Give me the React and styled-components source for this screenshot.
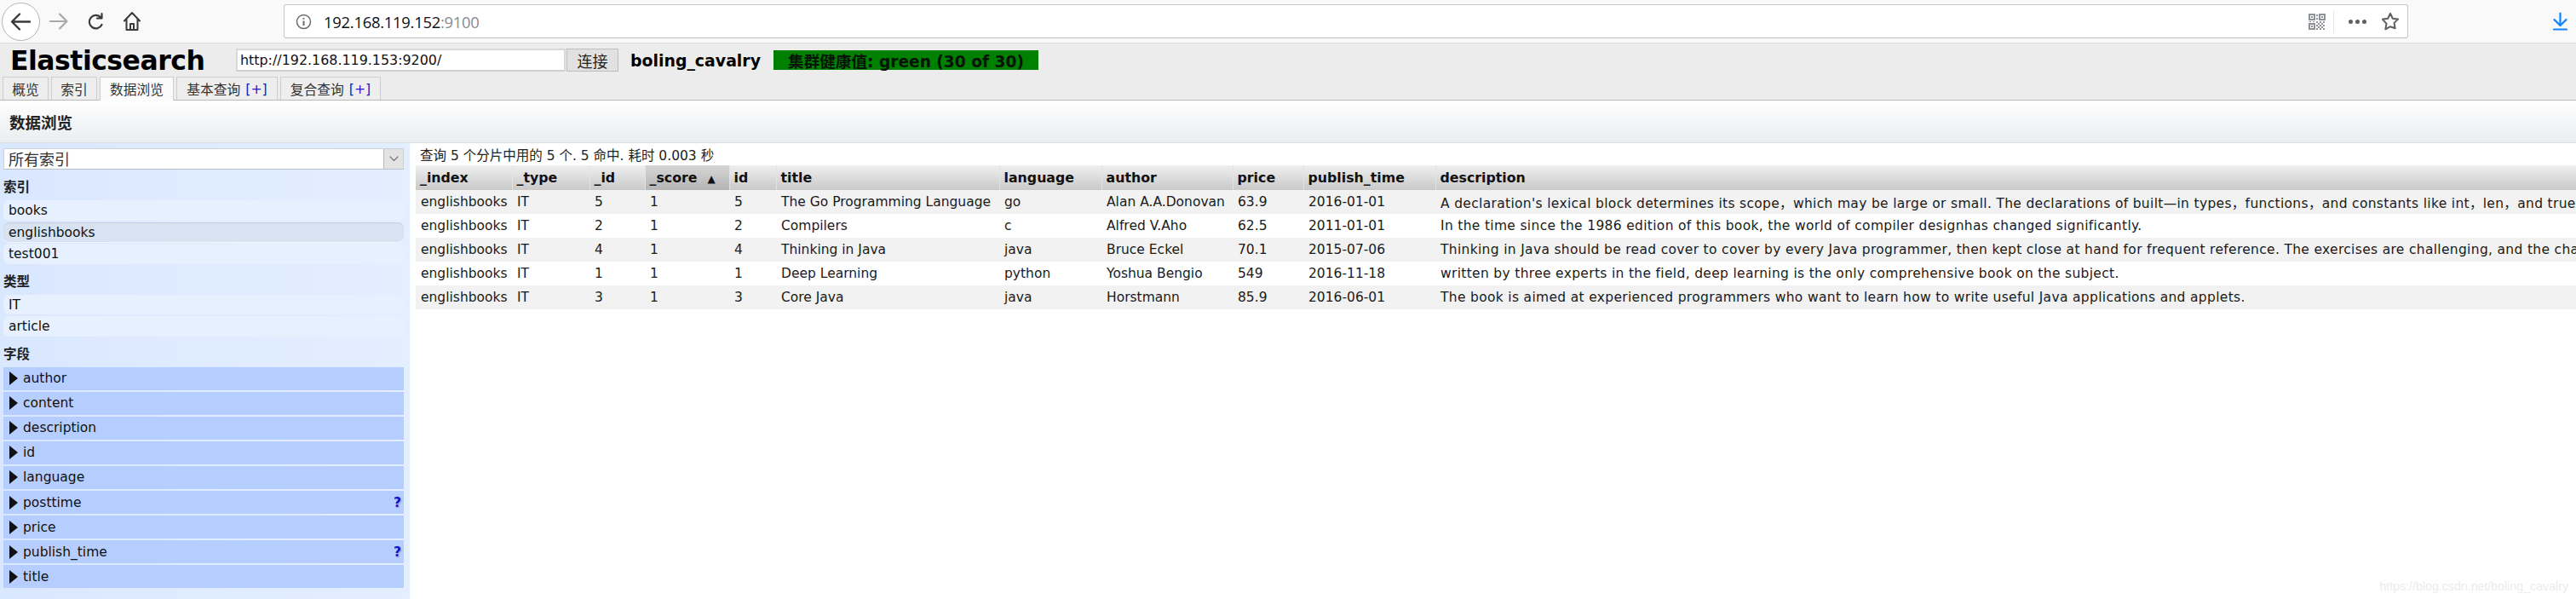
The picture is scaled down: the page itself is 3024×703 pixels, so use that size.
import React from 'react';
import styled, { createGlobalStyle } from 'styled-components';

const sans = '"DejaVu Sans", "Noto Sans CJK SC", sans-serif';

const GlobalStyle = createGlobalStyle`
  html, body {
    margin: 0;
    height: 100%;
    overflow: hidden;
    background: #fff;
  }
  body {
    font-family: ${sans};
    font-size: 15.5px;
    color: #111;
  }
`;

const Page = styled.div`
  position: relative;
  display: flex;
  flex-direction: column;
  height: 100vh;
  overflow: hidden;
`;

/* browser chrome */
const Toolbar = styled.div`
  display: flex;
  align-items: center;
  flex: none;
  height: 51px;
  box-sizing: border-box;
  padding-left: 2px;
  background: #f9f9fa;
  border-bottom: 1px solid #dcdcdc;
`;

const BackButton = styled.div`
  display: flex;
  align-items: center;
  justify-content: center;
  flex: none;
  width: 45px;
  height: 45px;
  box-sizing: border-box;
  border: 1px solid #b5b5b7;
  border-radius: 50%;
  background: #fff;
`;

const NavIcon = styled.svg`
  flex: none;
  margin-left: ${({ $left }) => $left}px;
`;

const UrlBar = styled.div`
  display: flex;
  align-items: center;
  flex: none;
  width: 2494px;
  height: 40px;
  margin-left: 168px;
  box-sizing: border-box;
  padding: 0 9px 0 13px;
  background: #fff;
  border: 1px solid #c8c8c9;
  border-bottom-color: #bdbdbe;
  border-radius: 3px;
`;

const Host = styled.span`
  margin-left: 14px;
  font-family: "Open Sans", "Liberation Sans", sans-serif;
  font-size: 18.4px;
  letter-spacing: -0.25px;
  color: #111;
`;

const Port = styled.span`
  color: #8a8a8f;
`;

const UrlActions = styled.div`
  display: flex;
  align-items: center;
  margin-left: auto;
`;

const UrlDivider = styled.div`
  width: 1px;
  height: 27px;
  margin: 0 17px 0 9px;
  background: #e6e6e7;
`;

/* head plugin header */
const Header = styled.div`
  flex: none;
  height: 67px;
  box-sizing: border-box;
  background: #ececec;
  border-bottom: 1px solid #b9b9b9;
`;

const HeaderRow = styled.div`
  display: flex;
  align-items: center;
  height: 39px;
`;

const Brand = styled.h1`
  width: 265px;
  margin: 0 0 0 12px;
  font-size: 31.5px;
  font-weight: 700;
  letter-spacing: -0.5px;
  white-space: nowrap;
  color: #000;
`;

const HostInput = styled.input`
  width: 387px;
  height: 27px;
  box-sizing: border-box;
  padding: 0 3px;
  border: 2px solid #d8d8d8;
  border-bottom-color: #cfcfcf;
  background: #fff;
  font-family: ${sans};
  font-size: 15.9px;
  color: #111;
  outline: none;
`;

const ConnectButton = styled.button`
  width: 61px;
  height: 27px;
  margin-left: 1px;
  padding: 0;
  border: 1px solid #bdbdbd;
  background: #e1e1e1;
  font-family: ${sans};
  font-size: 18px;
  color: #222;
`;

const ClusterName = styled.span`
  width: 154px;
  margin-left: 14px;
  font-size: 18.9px;
  font-weight: 700;
  white-space: nowrap;
  color: #000;
`;

const Health = styled.span`
  display: flex;
  align-items: center;
  justify-content: center;
  width: 311px;
  height: 23px;
  margin-left: 14px;
  background: #008000;
  font-size: 18.6px;
  font-weight: 700;
  white-space: nowrap;
  color: #061306;
`;

const Tabs = styled.div`
  display: flex;
  align-items: flex-end;
  gap: 3px;
  height: 27px;
  padding-left: 3px;
`;

const Tab = styled.div`
  display: flex;
  align-items: center;
  justify-content: center;
  width: ${({ $width }) => $width}px;
  height: ${({ $active }) => ($active ? 28 : 27)}px;
  box-sizing: border-box;
  margin-bottom: ${({ $active }) => ($active ? -1 : 0)}px;
  background: ${({ $active }) => ($active ? '#fbfbfb' : '#eee')};
  border: 1px solid #cdcdcd;
  border-bottom: none;
  font-size: 15.75px;
  white-space: nowrap;
  color: #333;
`;

const Plus = styled.span`
  margin-left: 6px;
  color: #1a1acb;
`;

const TitleBar = styled.div`
  display: flex;
  align-items: center;
  flex: none;
  height: 50px;
  box-sizing: border-box;
  padding-left: 11px;
  background: linear-gradient(#fefefe, #eaedf0);
  border-bottom: 1px solid #dce0e5;
  font-size: 18.5px;
  font-weight: 700;
  color: #222;
`;

const Body = styled.div`
  display: flex;
  flex: 1;
  min-height: 0;
`;

/* left filter column */
const Sidebar = styled.aside`
  flex: none;
  width: 481px;
  box-sizing: border-box;
  padding: 6px 7px 0 4px;
  background: linear-gradient(90deg, #d9e7ff 0%, #dfebff 45%, #e3eeff 100%);
`;

const SelectBox = styled.div`
  display: flex;
  height: 25px;
  box-sizing: border-box;
  background: #fff;
  border: 1px solid #ccd2dc;
  border-bottom-color: #b9c0cc;
`;

const SelectValue = styled.span`
  flex: 1;
  padding: 1px 0 0 5px;
  font-size: 18px;
  line-height: 23px;
  color: #333;
`;

const SelectArrow = styled.span`
  display: flex;
  align-items: center;
  justify-content: center;
  width: 22px;
  background: #e3e3e3;
  border-left: 1px solid #b8b8b8;
`;

const GroupTitle = styled.h4`
  display: flex;
  align-items: center;
  height: 36px;
  margin: 0;
  padding-top: 2px;
  box-sizing: border-box;
  font-size: 15.5px;
  font-weight: 700;
  color: #222;
`;

const FilterList = styled.div`
  display: flex;
  flex-direction: column;
  gap: 2px;
`;

const FilterItem = styled.div`
  height: 23.5px;
  box-sizing: border-box;
  padding-left: 6px;
  background: ${({ $active }) => ($active ? '#d8e2f0' : '#e7f0ff')};
  border-radius: 7px;
  box-shadow: ${({ $active }) => ($active ? 'inset 0 1px 1px #c6d0df, 0 1px 0 #f2f6ff' : 'none')};
  line-height: 24px;
  color: #111;
`;

const FieldList = styled.div`
  display: flex;
  flex-direction: column;
  gap: 2px;
`;

const Field = styled.div`
  display: flex;
  align-items: center;
  height: 27.1px;
  box-sizing: border-box;
  padding: 0 3px 0 7px;
  background: #b6ceff;
  color: #111;
`;

const Caret = styled.svg`
  flex: none;
  margin-right: 6px;
`;

const Hint = styled.span`
  margin-left: auto;
  font-weight: 700;
  color: #1111cc;
  text-shadow: 1px 1px 2px #8a9ad8;
`;

/* results */
const Results = styled.main`
  flex: 1;
  min-width: 0;
  padding-left: 7px;
  overflow: hidden;
`;

const Summary = styled.div`
  height: 26px;
  padding-left: 5px;
  line-height: 30px;
  white-space: nowrap;
  color: #222;
`;

const Table = styled.table`
  width: 2536px;
  table-layout: fixed;
  border-collapse: collapse;
`;

const HeadCell = styled.th`
  height: 29px;
  box-sizing: border-box;
  padding: 0 5px;
  text-align: left;
  font-size: 15.8px;
  font-weight: 700;
  white-space: nowrap;
  color: #111;
  border-left: 1px solid #e4e4e4;
  background: ${({ $sorted }) =>
    $sorted ? 'linear-gradient(#d6d6d6, #b4b4b4)' : 'linear-gradient(#efefef, #c9c9c9)'};
  &:first-child {
    border-left: none;
  }
`;

const SortArrow = styled.span`
  margin-left: 12px;
  font-size: 12px;
`;

const Row = styled.tr`
  background: ${({ $even }) => ($even ? '#f2f2f2' : '#fff')};
`;

const Cell = styled.td`
  height: 28px;
  box-sizing: border-box;
  padding: 0 5px 0 6px;
  letter-spacing: ${({ $long }) => ($long ? '0.32px' : 'normal')};
  white-space: nowrap;
  overflow: hidden;
  color: #1a1a1a;
`;

const Watermark = styled.div`
  position: absolute;
  right: 9px;
  bottom: 7px;
  font-family: "Liberation Sans", sans-serif;
  font-size: 14.2px;
  color: #ececec;
`;

const columns = [
  ['_index', 113],
  ['_type', 91],
  ['_id', 65],
  ['_score', 99],
  ['id', 55],
  ['title', 262],
  ['language', 120],
  ['author', 154],
  ['price', 83],
  ['publish_time', 155],
  ['description', 1351],
];

const rows = [
  ['englishbooks', 'IT', '5', '1', '5', 'The Go Programming Language', 'go', 'Alan A.A.Donovan', '63.9', '2016-01-01',
    "A declaration's lexical block determines its scope，which may be large or small. The declarations of built—in types，functions，and constants like int，len，and true are in the universe block and can be referred to throughout the entire program."],
  ['englishbooks', 'IT', '2', '1', '2', 'Compilers', 'c', 'Alfred V.Aho', '62.5', '2011-01-01',
    'In the time since the 1986 edition of this book, the world of compiler designhas changed significantly.'],
  ['englishbooks', 'IT', '4', '1', '4', 'Thinking in Java', 'java', 'Bruce Eckel', '70.1', '2015-07-06',
    'Thinking in Java should be read cover to cover by every Java programmer, then kept close at hand for frequent reference. The exercises are challenging, and the chapter on Collections is superb!'],
  ['englishbooks', 'IT', '1', '1', '1', 'Deep Learning', 'python', 'Yoshua Bengio', '549', '2016-11-18',
    'written by three experts in the field, deep learning is the only comprehensive book on the subject.'],
  ['englishbooks', 'IT', '3', '1', '3', 'Core Java', 'java', 'Horstmann', '85.9', '2016-06-01',
    'The book is aimed at experienced programmers who want to learn how to write useful Java applications and applets.'],
];

const fields = [
  ['author'],
  ['content'],
  ['description'],
  ['id'],
  ['language'],
  ['posttime', true],
  ['price'],
  ['publish_time', true],
  ['title'],
];

const stroke = { fill: 'none', strokeLinecap: 'round', strokeLinejoin: 'round' };

const QrIcon = () => (
  <svg width="20" height="19" viewBox="0 0 20 19" fill="#8f9399">
    <path d="M0 0h8v8H0zM2 2v4h4V2zM12 0h8v8h-8zM14 2v4h4V2zM0 11h8v8H0zM2 13v4h4v-4z" fillRule="evenodd" />
    <path d="M3 3h2v2H3zM15 3h2v2h-2zM3 14h2v2H3zM9 1h2v2H9zM9 5h2v2H9zM9 9h2v2H9zM11 11h2v2h-2zM13 9h2v2h-2zM17 9h2v2h-2zM15 11h2v2h-2zM9 13h2v2H9zM13 13h2v2h-2zM17 13h2v2h-2zM11 15h2v2h-2zM15 15h2v2h-2zM9 17h2v2H9zM13 17h2v2h-2zM17 17h2v2h-2zM1 9h2v1H1zM5 9h2v1H5z" />
  </svg>
);

export default function App() {
  return (
    <Page>
      <GlobalStyle />
      <Toolbar>
        <BackButton>
          <svg width="25" height="25" viewBox="0 0 25 25" {...stroke} stroke="#3a3a3c" strokeWidth="2.4">
            <path d="M23 12.5H2.5M11 3.5l-9 9 9 9" />
          </svg>
        </BackButton>
        <NavIcon $left={11} width="22" height="24" viewBox="0 0 22 24" {...stroke} stroke="#a9a9ab" strokeWidth="2.2">
          <path d="M1 12h19M12 3.5l8.5 8.5L12 20.5" />
        </NavIcon>
        <NavIcon $left={23} width="19" height="22" viewBox="0 0 19 22" {...stroke} stroke="#3a3a3c" strokeWidth="2.2">
          <path d="M16.5 15a7.7 7.7 0 1 1-1-8.3M16.5 2v5.5H11" />
        </NavIcon>
        <NavIcon $left={23} width="20" height="24" viewBox="0 0 20 24" {...stroke} stroke="#3a3a3c" strokeWidth="2">
          <path d="M1 11.5 10 2l9 9.5M3.5 9.5V22h13V9.5M8 22v-7h4v7" />
        </NavIcon>
        <UrlBar>
          <svg width="19" height="19" viewBox="0 0 19 19" fill="none" stroke="#6a6a6e" strokeWidth="1.5">
            <circle cx="9.5" cy="9.5" r="8" />
            <path d="M9.5 8.5v5.5" strokeWidth="2" />
            <path d="M9.5 5v1.6" strokeWidth="2" />
          </svg>
          <Host>
            192.168.119.152<Port>:9100</Port>
          </Host>
          <UrlActions>
            <QrIcon />
            <UrlDivider />
            <svg width="21" height="5" viewBox="0 0 21 5" fill="#5f5f63">
              <circle cx="2.5" cy="2.5" r="2.5" />
              <circle cx="10.5" cy="2.5" r="2.5" />
              <circle cx="18.5" cy="2.5" r="2.5" />
            </svg>
            <NavIcon $left={17} width="22" height="22" viewBox="0 0 22 22" {...stroke} stroke="#5f5f63" strokeWidth="2">
              <path d="M11 1.8l2.8 5.9 6.3.8-4.6 4.4 1.2 6.4L11 17.2l-5.7 3.1 1.2-6.4L1.9 8.5l6.3-.8z" />
            </NavIcon>
          </UrlActions>
        </UrlBar>
        <NavIcon $left={170} width="17" height="22" viewBox="0 0 17 22" {...stroke} stroke="#0a84ff" strokeWidth="2.2">
          <path d="M8.5 1.5v14M1.5 9l7 7 7-7M1 20.5h15" />
        </NavIcon>
      </Toolbar>

      <Header>
        <HeaderRow>
          <Brand>Elasticsearch</Brand>
          <HostInput readOnly value="http://192.168.119.153:9200/" />
          <ConnectButton>连接</ConnectButton>
          <ClusterName>boling_cavalry</ClusterName>
          <Health>集群健康值: green (30 of 30)</Health>
        </HeaderRow>
        <Tabs>
          <Tab $width={54}>概览</Tab>
          <Tab $width={54}>索引</Tab>
          <Tab $width={87} $active>数据浏览</Tab>
          <Tab $width={119}>基本查询<Plus>[+]</Plus></Tab>
          <Tab $width={118}>复合查询<Plus>[+]</Plus></Tab>
        </Tabs>
      </Header>

      <TitleBar>数据浏览</TitleBar>

      <Body>
        <Sidebar>
          <SelectBox>
            <SelectValue>所有索引</SelectValue>
            <SelectArrow>
              <svg width="11" height="7" viewBox="0 0 11 7" {...stroke} stroke="#777" strokeWidth="1.2">
                <path d="M1 1l4.5 4.5L10 1" />
              </svg>
            </SelectArrow>
          </SelectBox>
          <GroupTitle>索引</GroupTitle>
          <FilterList>
            <FilterItem>books</FilterItem>
            <FilterItem $active>englishbooks</FilterItem>
            <FilterItem>test001</FilterItem>
          </FilterList>
          <GroupTitle>类型</GroupTitle>
          <FilterList>
            <FilterItem>IT</FilterItem>
            <FilterItem>article</FilterItem>
          </FilterList>
          <GroupTitle>字段</GroupTitle>
          <FieldList>
            {fields.map(([name, hint]) => (
              <Field key={name}>
                <Caret width="10" height="16" viewBox="0 0 10 16" fill="#111">
                  <path d="M0 0l10 8-10 8z" />
                </Caret>
                {name}
                {hint && <Hint>?</Hint>}
              </Field>
            ))}
          </FieldList>
        </Sidebar>

        <Results>
          <Summary>查询 5 个分片中用的 5 个. 5 命中. 耗时 0.003 秒</Summary>
          <Table>
            <colgroup>
              {columns.map(([name, width]) => (
                <col key={name} width={width} />
              ))}
            </colgroup>
            <thead>
              <tr>
                {columns.map(([name]) => (
                  <HeadCell key={name} $sorted={name === '_score'}>
                    {name}
                    {name === '_score' && <SortArrow>▲</SortArrow>}
                  </HeadCell>
                ))}
              </tr>
            </thead>
            <tbody>
              {rows.map((row, i) => (
                <Row key={row[2]} $even={i % 2 === 0}>
                  {row.map((value, j) => (
                    <Cell key={j} $long={j === row.length - 1}>{value}</Cell>
                  ))}
                </Row>
              ))}
            </tbody>
          </Table>
        </Results>
      </Body>

      <Watermark>https://blog.csdn.net/boling_cavalry</Watermark>
    </Page>
  );
}
